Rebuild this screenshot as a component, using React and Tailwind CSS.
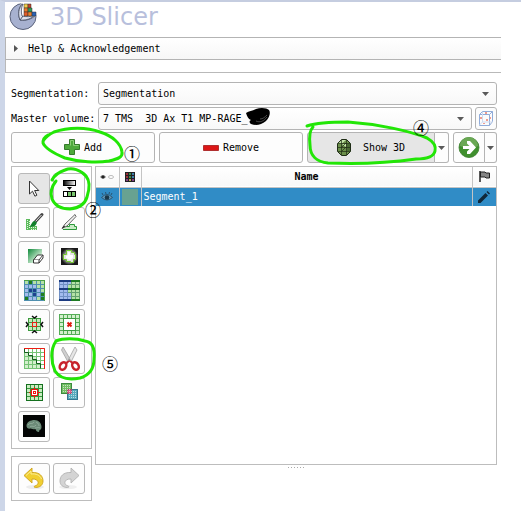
import React, { useState } from "react";

const GREEN = "#22e606";

const Caret = () => (
  <svg width="7" height="4" viewBox="0 0 7 4" aria-hidden="true">
    <path d="M0 0h7L3.5 4z" fill="#5a5a5a" />
  </svg>
);

const cellColors = {
  g: "#b5e2a6",
  G: "#1f7d1f",
  b: "#a3bbee",
  B: "#1f4190",
  w: "#ffffff",
  l: "#d3efcd",
};

// 5 x 5 cell sheet shared by several effect icons
const Cells = ({ rows, line }) => (
  <g shapeRendering="crispEdges">
    <rect x="2" y="1" width="21" height="21" fill={line} />
    {rows.map((row, y) =>
      row.split("").map((c, x) => (
        <rect
          key={`${x}-${y}`}
          x={3 + x * 4}
          y={2 + y * 4}
          width="3"
          height="3"
          fill={cellColors[c]}
        />
      ))
    )}
  </g>
);

const CursorIcon = () => (
  <path
    d="M7.5 4v13l3-2.8 2.4 5 2-1-2.3-4.7h4.2z"
    fill="#fff"
    stroke="#333"
    strokeWidth="1"
  />
);

const ThresholdIcon = () => (
  <>
    <defs>
      <linearGradient id="threshold">
        <stop offset="0" stopColor="#000" />
        <stop offset="1" stopColor="#fff" />
      </linearGradient>
    </defs>
    <rect x="6.5" y="3.5" width="12" height="5" fill="url(#threshold)" stroke="#000" />
    <path d="M10 10h5l-2.500 3z" fill="#000" />
    <rect x="6.5" y="14.5" width="12" height="5" fill="#fff" stroke="#000" />
    <path d="M11 15h3v4h-3zM15 15h3v4h-3z" fill="#79c46d" />
    <path d="M10.5 15v4M14.5 15v4" stroke="#000" />
  </>
);

const PaintIcon = () => (
  <>
    <path d="M4 8h4v7h7v4H4z" fill="#5dbb5d" />
    <path
      d="M5.5 9v9M7.5 10v8M9.500 16v3M11.500 16v3M13.500 16v3"
      stroke="#e6f6e3"
      strokeDasharray="1 1"
    />
    <path d="M20 3.500L13.500 10.500" stroke="#444" strokeWidth="3" strokeLinecap="round" />
    <path d="M19.500 4l-6 6.500" stroke="#e8e8e8" />
    <path d="M14.500 11c1 3-3 5.500-7 4.500 2-1 2-4.500 4.500-5.500z" fill="#11802b" />
  </>
);

const DrawIcon = () => (
  <>
    <path d="M5 18.500h14.500v-3h-2v-2h-5v2h-4l-1 2z" fill="#c9ebc6" />
    <path d="M6 18.500h13.500v-3h-2v-2h-5v2h-4" stroke="#2b9a3a" />
    <path d="M18 3.500L8 13l-3 4.500L10 15l9-9.500z" fill="#f3f3f3" stroke="#555" strokeWidth=".9" />
    <path d="M5 17.500l2-3 1 1.200z" fill="#111" />
  </>
);

const EraseIcon = () => (
  <>
    <defs>
      <linearGradient id="erase" x1="0" y1="0" x2="1" y2="1">
        <stop offset="0" stopColor="#0f8a3a" />
        <stop offset=".75" stopColor="#dcf2de" />
      </linearGradient>
    </defs>
    <path d="M6 4h14v5l-9 9H6z" fill="url(#erase)" />
    <path d="M11.500 15l4-5h5.500l-4 5z" fill="#fff" stroke="#222" strokeWidth=".9" />
    <path d="M11.500 15v3H17v-3M17 18l4-5v-3" fill="#fff" stroke="#222" strokeWidth=".9" />
  </>
);

const LevelTracingIcon = () => (
  <>
    <defs>
      <radialGradient id="trace">
        <stop offset=".5" stopColor="#bbb" />
        <stop offset="1" stopColor="#181818" />
      </radialGradient>
    </defs>
    <rect x="4" y="3" width="17" height="17" fill="url(#trace)" />
    <path
      d="M9.500 5.500h5v2h3v2h1v5h-2v3h-3v-1h-4v-2h-3v-5h3z"
      fill="#e4e4e4"
      stroke="#74c92f"
    />
    <path d="M11 7h2v3h3v3l-3 2-4-2v-2l2-1z" fill="#fff" />
  </>
);

const IslandsIcon = () => (
  <>
    <Cells line="#4f8fae" rows={["gGggg", "bbbgg", "bBBbg", "bbBbG", "GbbgG"]} />
    <path d="M2 1.500h21M22.500 1v21" stroke="#4aa045" />
  </>
);

const SplitIcon = () => (
  <g shapeRendering="crispEdges">
    <Cells line="#63a06e" rows={["bbbgg", "bbggg", "bbggg", "bbbgg", "bbbgg"]} />
    <path d="M2.500 2v19M6.500 2v19M10.500 2v19M2 5.500h10M2 13.500h9M2 17.500h12" stroke="#6f8fc4" />
    <path d="M2 2h12M2 10h9M2 21h12" stroke="#1c3b80" strokeWidth="2" />
    <path d="M14 2h9M11 10h12M14 21h9" stroke="#1d7a22" strokeWidth="2" />
  </g>
);

const MarginIcon = () => (
  <>
    <path d="M6 5h13v13H6z" fill="#c4e8bc" />
    <path
      d="M6.500 5v13M10.500 5v13M14.500 5v13M18.500 5v13M6 5.500h13M6 9.500h13M6 13.500h13M6 17.500h13"
      stroke="#3b9a3c"
    />
    <rect x="10.500" y="9.500" width="4" height="4" fill="#c4e8bc" stroke="#ee1c14" />
    <path d="M10 3l2.500 2L15 3M10 20l2.500-2L15 20M4 9l2 2.500L4 14M21 9l-2 2.500 2 2.500" stroke="#111" strokeWidth="1.500" />
  </>
);

const HollowIcon = () => (
  <>
    <Cells line="#55ad57" rows={["lllll", "lwwwl", "lwwwl", "lwwwl", "lllll"]} />
    <rect x="6.500" y="5.500" width="12" height="12" fill="#fff" stroke="#3d9c42" />
    <path d="M10.500 9.500l4 4M14.500 9.500l-4 4" stroke="#dd1c10" strokeWidth="2" />
  </>
);

const SmoothingIcon = () => (
  <>
    <Cells line="#74c274" rows={["wwwww", "lwwww", "lllww", "lllww", "llllw"]} />
    <path
      d="M2.500 2v3.500h4v3h4v4h4v4h4v5"
      stroke="#125c1c"
    />
    <path d="M2 1.500h20.500V22" stroke="#ee1c14" />
  </>
);

const ScissorsIcon = () => (
  <>
    <path d="M6 0L4.500 3 11 15l3-1.500z" fill="#cfcfcf" stroke="#999" strokeWidth=".7" />
    <path d="M18 0l2 3-6 12-3-1.500z" fill="#e6e6e6" stroke="#999" strokeWidth=".7" />
    <ellipse cx="6" cy="19" rx="3" ry="4" transform="rotate(35 6 19)" stroke="#c7222b" strokeWidth="2.400" />
    <ellipse cx="18.500" cy="19" rx="3" ry="4" transform="rotate(-35 18.500 19)" stroke="#c7222b" strokeWidth="2.400" />
    <path d="M8.500 15l4-2 4 2-1.500 2-2.500-2.500L10 17z" fill="#c7222b" />
    <circle cx="12.500" cy="12.500" r="1" fill="#999" />
  </>
);

const SeedsIcon = () => (
  <>
    <rect x="4.500" y="3.500" width="16" height="16" fill="#c9ebc0" stroke="#14701e" />
    <path
      d="M8.500 4v15M12.500 4v15M16.500 4v15M5 7.500h15M5 11.500h15M5 15.500h15"
      stroke="#36993c"
    />
    <path d="M12.500 6v11M7 11.500h11" stroke="#f01010" />
    <rect x="9.500" y="8.500" width="6" height="6" fill="#fff" stroke="#f01010" />
    <rect x="11.500" y="10.500" width="2" height="2" fill="#fff" stroke="#f01010" />
  </>
);

const LogicalIcon = () => (
  <>
    <defs>
      <pattern id="dots" width="2" height="2" patternUnits="userSpaceOnUse">
        <rect width="1" height="1" fill="#fff" opacity=".6" />
      </pattern>
    </defs>
    <rect x="4.500" y="2.500" width="10" height="10" fill="#71bd63" stroke="#3c8a3e" />
    <rect x="10.500" y="8.500" width="10" height="10" fill="#57aabd" stroke="#35768f" />
    <rect x="10.500" y="8.500" width="4" height="4" fill="#dc5b87" stroke="#a34a6c" />
    <path d="M5 3h9v9H5zM11 9h9v9h-9z" fill="url(#dots)" />
  </>
);

const BrainIcon = () => (
  <>
    <rect x="1" y="0" width="22" height="22" fill="#030504" />
    <path
      d="M4.500 11c0-4 4-6 8-6s7 3 7 7c0 2-1 3-2 3l-.5 2c-2 0-3-1-3.500-3-2 1-3-.5-5-.5-2 .5-4-.5-4-2.500z"
      fill="#6c8b78"
    />
    <path
      d="M6 10c2-3 4 0 6-3M8 12c2-2 4 1 6-2M14 7c1 1 3 1 3 4M13 13c2 0 3-1 5 0"
      stroke="#9ab5a4"
      strokeWidth=".8"
    />
  </>
);

const UndoIcon = () => (
  <>
    <ellipse cx="13" cy="20" rx="9" ry="2" fill="#ececec" />
    <path
      d="M2 8.500L10 1v4.500c8-.5 11 4 11 8.500 0 4-3 6.500-7.500 6.500-1.500 0-2-1-.500-1.500 5-1.500 4-7.500-3-7v4z"
      fill="#f1cf31"
      stroke="#cda31c"
      strokeWidth=".9"
    />
    <path d="M4 8.500L9 4v3c5-.5 9 1 10.500 5" stroke="#fbed96" />
  </>
);

const RedoIcon = () => (
  <>
    <ellipse cx="11" cy="20" rx="9" ry="2" fill="#efefef" />
    <path
      d="M22 8.500L14 1v4.500C6 5 3 9.500 3 14c0 4 3 6.500 7.500 6.500 1.500 0 2-1 .500-1.500-5-1.500-4-7.500 3-7v4z"
      fill="#d4d4d4"
      stroke="#b2b2b2"
      strokeWidth=".9"
    />
  </>
);

const effects = [
  { name: "None", Icon: CursorIcon },
  { name: "Threshold", Icon: ThresholdIcon },
  { name: "Paint", Icon: PaintIcon },
  { name: "Draw", Icon: DrawIcon },
  { name: "Erase", Icon: EraseIcon },
  { name: "Level tracing", Icon: LevelTracingIcon },
  { name: "Islands", Icon: IslandsIcon },
  { name: "Split volume", Icon: SplitIcon },
  { name: "Margin", Icon: MarginIcon },
  { name: "Hollow", Icon: HollowIcon },
  { name: "Smoothing", Icon: SmoothingIcon },
  { name: "Scissors", Icon: ScissorsIcon },
  { name: "Grow from seeds", Icon: SeedsIcon },
  { name: "Logical operators", Icon: LogicalIcon },
  { name: "Mask volume", Icon: BrainIcon },
];

const ToolButton = ({ name, Icon, active, onClick, children }) => (
  <button
    aria-label={name}
    onClick={onClick}
    className={`relative flex h-[31px] w-8 items-center justify-center rounded-[3px] border border-[#b9b9b9] ${
      active ? "bg-[#e6e6e6]" : "bg-[#fdfdfd]"
    }`}
  >
    <svg
      width="24"
      height="23"
      viewBox="0 0 24 23"
      fill="none"
      className="shrink-0 overflow-visible"
      aria-hidden="true"
    >
      <Icon />
    </svg>
    {children}
  </button>
);

// hand-drawn ring around a control
const Ring = ({ d, className }) => (
  <svg
    className={`pointer-events-none absolute z-10 overflow-visible ${className}`}
    width="10"
    height="10"
    fill="none"
    stroke={GREEN}
    strokeWidth="3"
    strokeLinecap="round"
    strokeLinejoin="round"
    aria-hidden="true"
  >
    <path d={d} />
  </svg>
);

const Step = ({ children, className }) => (
  <span
    className={`pointer-events-none absolute z-20 font-['Noto_Sans_CJK_SC',sans-serif] text-base leading-4 font-medium text-black ${className}`}
  >
    {children}
  </span>
);

const Combo = ({ id, value, children }) => (
  <div className="relative min-w-0 flex-1">
    <select
      id={id}
      className="block h-[23px] w-full appearance-none rounded-[3px] border border-[#b4b4b4] bg-linear-to-b from-white to-[#f8f8f8] pl-1"
    >
      <option>{value}</option>
    </select>
    <span className="pointer-events-none absolute inset-y-0 right-2 flex items-center">
      <Caret />
    </span>
    {children}
  </div>
);

const pushButton =
  "relative flex items-center justify-center border border-[#b4b4b4]";

export default function App() {
  const [effect, setEffect] = useState("None");

  return (
    <div className="min-h-[511px] border-t-2 border-l-[5px] border-t-[#c5cde0] border-l-[#cdd6e8] bg-white font-['DejaVu_Sans_Mono',monospace] text-[10px] leading-4 text-black">
      <header className="flex h-[35px] items-start gap-3 pl-1">
        <svg width="29" height="29" viewBox="0 0 29 29" fill="none" aria-hidden="true">
          <circle cx="14" cy="14.500" r="13" fill="#a7b1d0" stroke="#59617a" />
          <path d="M12 1.500C9 6 9 13 11 18c6 1 12-1 16.500-4.500V0H12z" fill="#fff" />
          <path d="M13 1.500C9 6 9 13 11 18c6 1 12-1 16-5" stroke="#4a5268" />
          <path d="M14 2c-2 4-2 8-1 12 4 1 9 1 13-1l-4 3c-3 1.500-7 2.500-11 2-2-5-2-12 3-16z" fill="#dfe3ee" stroke="#4a5268" strokeWidth=".8" />
          <path d="M11 18l3-4" stroke="#4a5268" />
          <g stroke="#333" strokeWidth=".5">
            <path d="M15 2h4v4h-4z" fill="#f2cf4a" />
            <path d="M19 2h3v4h-3z" fill="#c8452d" />
            <path d="M15 6h4v4h-4z" fill="#ea7a2c" />
            <path d="M19 6h4v4h-4z" fill="#2f9a58" />
            <path d="M15 10h4v4h-4z" fill="#e45d28" />
            <path d="M19 10h4v4h-4z" fill="#e9822f" />
            <path d="M23 10h4v4h-4z" fill="#2a62b4" />
          </g>
        </svg>
        <h1 className="font-['DejaVu_Sans',sans-serif] text-2xl leading-[30px] text-[#b8bfdc]">
          3D Slicer
        </h1>
      </header>

      <section className="mr-5">
        <button className="flex h-[23px] w-full items-center gap-[10px] border border-r-0 border-[#b4b4b4] bg-linear-to-b from-white to-[#f7f7f7] pl-2">
          <svg width="4" height="7" viewBox="0 0 4 7" aria-hidden="true">
            <path d="M0 0l4 3.500L0 7z" fill="#555" />
          </svg>
          Help &amp; Acknowledgement
        </button>
        <div className="h-[13px] border-b border-l border-[#b9b9b9]" />
      </section>

      <main className="mt-[9px] mr-6 ml-[6px]">
        <div className="flex items-center">
          <label htmlFor="segmentation" className="w-[87px] shrink-0">
            Segmentation:
          </label>
          <Combo id="segmentation" value="Segmentation" />
        </div>

        <div className="mt-[2px] flex items-center">
          <label htmlFor="master" className="w-[87px] shrink-0">
            Master volume:
          </label>
          <Combo id="master" value={"7 TMS\u00a0 3D Ax T1 MP-RAGE_"}>
            <svg
              className="pointer-events-none absolute top-0 left-[148px]"
              width="26"
              height="20"
              viewBox="0 0 26 20"
              aria-hidden="true"
            >
              <path
                d="M0 6c3-2 6-2 10-4 5-2 11-1 13 1 2 3 0 8-3 11-5 4-10 5-15 3-2-2-2-3 0-4-3-1-4-4-5-7z"
                fill="#000"
              />
              <path d="M10 14c4 2 8 0 11-4M14 12c3 0 5-2 7-4" fill="none" stroke="#777" strokeWidth=".6" />
            </svg>
          </Combo>
          <button
            aria-label="Specify geometry"
            className="ml-[3px] flex h-[23px] w-[22px] items-center justify-center rounded-[3px] border border-[#b4b4b4] bg-[#fcfcfc]"
          >
            <svg width="16" height="15" viewBox="0 0 16 15" fill="none" aria-hidden="true">
              <path d="M1.500 3.500h10v11h-10zM1.500 3.500l3-3h10v10l-3 4M11.500 3.500l3-3" stroke="#91acd9" />
              <path d="M4.500 1v10h10M4.500 11l-3 3" stroke="#cfdaf0" />
              <path d="M7 1h2v2H7zM2 6h2v2H2zM8 8h2v2H8zM12 6h1v2h-1zM5 12h2v1H5z" fill="#ef9c90" />
            </svg>
          </button>
        </div>

        <div className="mt-[2px] flex h-[31px] gap-1">
          <button className={`${pushButton} flex-1 gap-[3px] rounded-[3px] bg-[#fdfdfd]`}>
            <svg width="17" height="17" viewBox="0 0 17 17" aria-hidden="true">
              <path d="M5.500.5h5v5h5v5h-5v5h-5v-5h-5v-5h5z" fill="#4fa93c" stroke="#357a2b" />
              <path d="M6.500 6.500v-5h3v5h5" fill="none" stroke="#8bcd76" />
            </svg>
            Add
            <Ring
              className="top-0 left-0"
              d="M36 2C32 4 31 7 31 10c2 5 10 10 22 15 14 4 32 5 44 3 9-2 14-4 13-9-1-8-9-16-22-20-13-5-32-5-46 0-6 3-9 6-11 9"
            />
            <Step className="top-[12px] left-[112px]">①</Step>
          </button>
          <button className={`${pushButton} flex-1 gap-1 rounded-[3px] bg-[#fdfdfd]`}>
            <svg width="16" height="6" viewBox="0 0 16 6" aria-hidden="true">
              <path d="M.5.5h15v5H.500z" fill="#dc1717" stroke="#b03030" />
            </svg>
            Remove
          </button>
          <div className="flex flex-1">
            <button className={`${pushButton} flex-1 gap-3 rounded-l-[3px] bg-[#e6e6e6]`}>
              <svg width="14" height="17" viewBox="0 0 14 17" aria-hidden="true">
                <path d="M4.500.5h5l4 4v8l-4 4h-5l-4-4v-8z" fill="#6b8f4a" stroke="#1f2d16" />
                <path d="M5 1h4L5 4.500H1zM5 5h4v3z" fill="#c3e3a8" />
                <path d="M10 5h3v7h-3z" fill="#4a6a33" />
                <path
                  d="M1 4.500h12M1 12.500h12M4.500 1v15M9.500 1v15M1 8.500h12M5 8l4-4M5 12l4-4"
                  fill="none"
                  stroke="#1f2d16"
                  strokeWidth=".7"
                />
              </svg>
              Show 3D
              <Ring
                className="top-0 left-0"
                d="M-1-7c9-3 23-4 41-4 30 2 62 9 79 16 7 4 9 9 8 13-1 5-8 8-19 8-28 4-63 5-88 4C9 29 2 23 2 12 1 3 2-3 5-6"
              />
              <Step className="-top-[14px] left-[105px]">④</Step>
            </button>
            <button
              aria-label="Show 3D options"
              className="flex w-[14px] items-center justify-center rounded-r-[3px] border border-l-0 border-[#b4b4b4] bg-[#fdfdfd]"
            >
              <Caret />
            </button>
          </div>
          <div className="flex">
            <button
              aria-label="Go to segmentations"
              className={`${pushButton} w-8 rounded-l-[3px] bg-[#fdfdfd]`}
            >
              <svg width="22" height="21" viewBox="0 0 22 21" className="shrink-0" aria-hidden="true">
                <circle cx="11" cy="10.500" r="10" fill="#3f8f2d" stroke="#387c2b" strokeWidth=".8" />
                <path d="M2 9a9 9 0 0118 0c-5 2-12 2-18 0z" fill="#6aa854" />
                <path d="M5 9h6.500L9 6.500V4h3l6 6.500-6 6.500H9v-2.500l2.500-2.500H5z" fill="#fff" />
              </svg>
            </button>
            <button
              aria-label="More destinations"
              className="flex w-3 items-center justify-center rounded-r-[3px] border border-l-0 border-[#b4b4b4] bg-[#fdfdfd]"
            >
              <Caret />
            </button>
          </div>
        </div>

        <div className="mt-[3px] flex items-start gap-[3px]">
          <aside className="flex w-[81px] shrink-0 flex-col gap-[7px]">
            <div className="grid grid-cols-2 gap-[3px] border border-[#bdbdbd] p-[6px]">
              {effects.map(({ name, Icon }) => (
                <ToolButton
                  key={name}
                  name={name}
                  Icon={Icon}
                  active={effect === name}
                  onClick={() => setEffect(name)}
                >
                  {name === "Threshold" && (
                    <>
                      <Ring
                        className="-top-px -left-px"
                        d="M3 8C-1 13-3 20-1 26c3 7 10 10 18 10 9-1 15-5 17-12 3-9 3-16-1-21-5-6-14-9-21-6-6 2-11 6-13 10"
                      />
                      <Step className="top-[27px] left-[31px]">②</Step>
                    </>
                  )}
                  {name === "Scissors" && (
                    <>
                      <Ring
                        className="-top-px -left-px"
                        d="M3-2C-3 7-2 19 2 28c5 8 15 9 25 7 10-3 14-10 14-19 1-10-1-17-9-18C23-5 10-5 3-2"
                      />
                      <Step className="top-[11px] left-[48px]">⑤</Step>
                    </>
                  )}
                </ToolButton>
              ))}
            </div>
            <div className="grid grid-cols-2 gap-[3px] border border-[#bdbdbd] p-[6px]">
              <ToolButton name="Undo" Icon={UndoIcon} />
              <ToolButton name="Redo" Icon={RedoIcon} />
            </div>
          </aside>

          <div className="min-w-0 flex-1">
            <div className="h-[299px] border border-[#bdbdbd]">
              <table className="w-full table-fixed border-collapse">
                <colgroup>
                  <col className="w-[23px]" />
                  <col className="w-[22px]" />
                  <col />
                  <col className="w-6" />
                </colgroup>
                <thead>
                  <tr className="h-5 border-b border-[#c4c4c4] bg-linear-to-b from-white to-[#f8f8f8]">
                    <th aria-label="Visibility" className="border-r border-[#c4c4c4] p-0">
                      <svg width="14" height="6" viewBox="0 0 14 6" className="mx-auto" aria-hidden="true">
                        <path d="M0 3q3-4 6 0-3 3-6 0z" fill="#777" />
                        <circle cx="3" cy="3" r="1.500" fill="#222" />
                        <ellipse cx="11" cy="3" rx="2.500" ry="1.500" fill="#fff" stroke="#bbb" />
                      </svg>
                    </th>
                    <th aria-label="Color" className="border-r border-[#c4c4c4] p-0">
                      <svg width="10" height="10" viewBox="0 0 10 10" className="mx-auto" aria-hidden="true">
                        <path d="M0 0h10v10H0z" fill="#222" />
                        <path d="M1 1h2v2H1zM1 4h2v2H1z" fill="#9b2f37" />
                        <path d="M4 1h2v2H4zM4 4h2v2H4z" fill="#398b47" />
                        <path d="M7 1h2v2H7zM7 4h2v2H7z" fill="#3c7da8" />
                        <path d="M1 7h2v2H1zM7 7h2v2H7z" fill="#833c83" />
                        <path d="M4 7h2v2H4z" fill="#b9a24b" />
                      </svg>
                    </th>
                    <th className="border-r border-[#c4c4c4] p-0 text-center font-bold">
                      Name
                    </th>
                    <th aria-label="Status" className="p-0">
                      <svg width="11" height="11" viewBox="0 0 11 11" className="mx-auto" aria-hidden="true">
                        <path d="M1 0v11" stroke="#222" strokeWidth="1.500" />
                        <path d="M1.500 1H6l1 1h3.500v5H7L6 6H1.500z" fill="#858585" stroke="#222" />
                      </svg>
                    </th>
                  </tr>
                </thead>
                <tbody>
                  <tr className="h-[19px] bg-[#308cc6] text-white">
                    <td className="border-r border-[#c4c4c4] p-0">
                      <svg width="12" height="10" viewBox="0 0 12 10" className="mx-auto" fill="none" aria-label="Visible">
                        <path d="M.5 5.500q5.500-6 11 0-5.500 5-11 0z" fill="#5f97ba" stroke="#2b5573" />
                        <circle cx="6" cy="5.500" r="2.300" fill="#193749" />
                        <path d="M2 3L1 1M5 2L4.500 0M8 2l.5-2M10 3l1-2" stroke="#2b5573" />
                      </svg>
                    </td>
                    <td className="border-r border-[#c4c4c4] p-px">
                      <div className="mx-auto h-4 w-4 bg-[#68a291]" />
                    </td>
                    <td className="border-r border-[#c4c4c4] p-0 pl-[2px]">Segment_1</td>
                    <td className="p-0">
                      <svg width="12" height="12" viewBox="0 0 12 12" className="mx-auto" aria-label="Not started">
                        <path d="M0 9.500L7.500 2 10 4.500 2.500 12H0zM8.500 1L9.500 0 12 2.500l-1 1z" fill="#10283a" />
                      </svg>
                    </td>
                  </tr>
                </tbody>
              </table>
            </div>
            <div className="mt-[2px] flex justify-center gap-[2px]">
              {[0, 1, 2, 3, 4, 5].map((dot) => (
                <i key={dot} className="h-px w-px bg-[#aaa]" />
              ))}
            </div>
          </div>
        </div>
      </main>
    </div>
  );
}
